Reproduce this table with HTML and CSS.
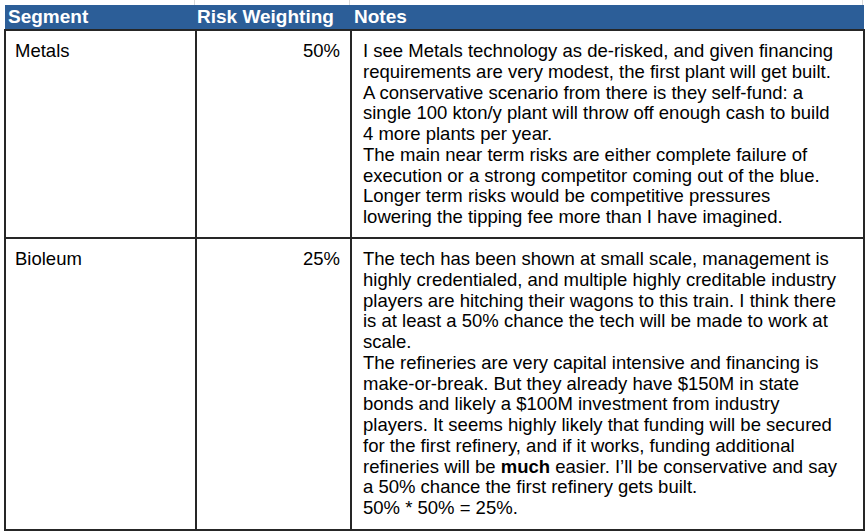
FILE: index.html
```html
<!DOCTYPE html>
<html>
<head>
<meta charset="utf-8">
<link rel="stylesheet" href="styles.css">
</head>
<body>
<div class="sheet">
  <div class="gridstrip">
    <div class="g g1"></div>
    <div class="g g2"></div>
    <div class="g g3"></div>
  </div>
  <table class="risk">
    <colgroup>
      <col class="c1">
      <col class="c2">
      <col class="c3">
    </colgroup>
    <thead>
      <tr>
        <th class="h-seg">Segment</th>
        <th class="h-risk">Risk Weighting</th>
        <th class="h-notes">Notes</th>
      </tr>
    </thead>
    <tbody>
      <tr class="r1">
        <td class="seg">Metals</td>
        <td class="pct">50%</td>
        <td class="notes">I see Metals technology as de-risked, and given financing<br>requirements are very modest, the first plant will get built.<br>A conservative scenario from there is they self-fund: a<br>single 100 kton/y plant will throw off enough cash to build<br>4 more plants per year.<br>The main near term risks are either complete failure of<br>execution or a strong competitor coming out of the blue.<br>Longer term risks would be competitive pressures<br>lowering the tipping fee more than I have imagined.</td>
      </tr>
      <tr class="r2">
        <td class="seg">Bioleum</td>
        <td class="pct">25%</td>
        <td class="notes">The tech has been shown at small scale, management is<br>highly credentialed, and multiple highly creditable industry<br>players are hitching their wagons to this train. I think there<br>is at least a 50% chance the tech will be made to work at<br>scale.<br>The refineries are very capital intensive and financing is<br>make-or-break. But they already have $150M in state<br>bonds and likely a $100M investment from industry<br>players. It seems highly likely that funding will be secured<br>for the first refinery, and if it works, funding additional<br>refineries will be <b>much</b> easier. I’ll be conservative and say<br>a 50% chance the first refinery gets built.<br>50% * 50% = 25%.</td>
      </tr>
    </tbody>
  </table>
</div>
</body>
</html>
```

FILE: styles.css
```css
html, body {
  margin: 0;
  padding: 0;
  background: #ffffff;
}

.sheet {
  width: 865px;
  padding-left: 4px;
  box-sizing: border-box;
  font-family: "Liberation Sans", Arial, sans-serif;
}

.gridstrip {
  display: flex;
  height: 5px;
}

.g {
  box-sizing: border-box;
  border-right: 1px solid #d9d9d9;
}

.g1 { width: 191px; }
.g2 { width: 155px; }
.g3 { width: 513px; }

.risk {
  border-collapse: collapse;
  table-layout: fixed;
  width: 859px;
}

.c1 { width: 191px; }
.c2 { width: 155px; }
.c3 { width: 513px; }

.risk th {
  background: #2c5e98;
  color: #ffffff;
  font-weight: bold;
  font-size: 19px;
  line-height: 24px;
  height: 24px;
  padding: 0;
  text-align: left;
  white-space: nowrap;
}

.h-seg { padding-left: 3px !important; }
.h-risk { padding-left: 1px !important; }
.h-notes { padding-left: 3px !important; }

.risk td {
  border: 2px solid #262626;
  vertical-align: top;
  font-size: 18.5px;
  line-height: 20.75px;
  color: #000000;
  padding: 10px 10px 6px 9px;
}

.risk td.pct {
  text-align: right;
  padding-right: 10px;
}

.risk td.notes {
  padding-left: 11px;
  padding-right: 4px;
  white-space: nowrap;
}

.r1 td { height: 190px; }
.r2 td { height: 274px; }
```
